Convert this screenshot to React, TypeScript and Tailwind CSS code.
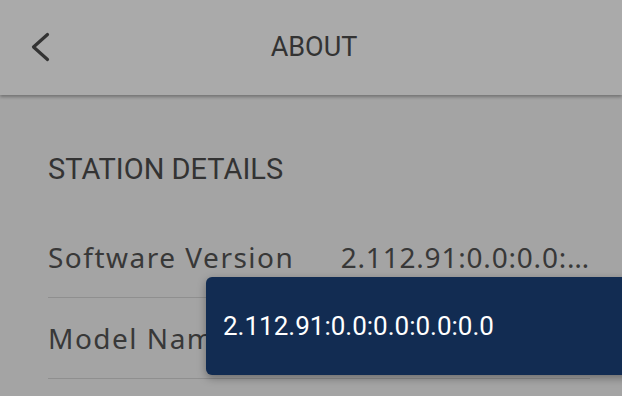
import React from "react";

export default function App() {
  return (
    <div className="relative w-[622px] h-[396px] overflow-hidden bg-[#a4a4a4]" style={{ fontFamily: '"Noto Sans", sans-serif' }}>
      <header className="relative z-10 h-[95px] bg-[#aaaaaa] shadow-[0_2px_3px_rgba(0,0,0,0.3)] flex items-center">
        <svg className="absolute left-[30px] top-[31px]" width="22" height="32" viewBox="0 0 22 32" fill="none">
          <path d="M17.5 3.5 L3.5 16 L17.5 28.5" stroke="#333" strokeWidth="3.2" strokeLinecap="round" strokeLinejoin="round" />
        </svg>
        <h1 className="w-full text-center text-[27px] text-[#333] leading-none pl-[6px]" style={{ fontFamily: 'Roboto, sans-serif' }}>
          ABOUT
        </h1>
      </header>
      <main className="pl-[48px] pr-[32px]">
        <h2 className="mt-[60px] text-[29px] leading-none text-[#333]" style={{ fontFamily: 'Roboto, sans-serif' }}>
          STATION DETAILS
        </h2>
        <div className="mt-[36px]">
          <div className="h-[81px] -mt-[3px] flex items-center border-b border-[#8f8f8f] text-[#383838] text-[28px]">
            <span className="w-[293px] tracking-[1.5px]">Software Version</span>
            <span className="tracking-[0.8px]">2.112.91:0.0:0.0:…</span>
          </div>
          <div className="h-[81px] flex items-center border-b border-[#8f8f8f] text-[#383838] text-[28px] tracking-[1.5px]">
            <span>Model Name</span>
          </div>
        </div>
      </main>
      <div className="absolute left-[206px] top-[277px] w-[430px] h-[98px] rounded-[6px] bg-[#122c52] shadow-[0_3px_8px_rgba(0,0,0,0.35)] flex items-center pl-[17px] text-white text-[26px]" style={{ fontFamily: 'Roboto, sans-serif' }}>
        2.112.91:0.0:0.0:0.0:0.0
      </div>
    </div>
  );
}
